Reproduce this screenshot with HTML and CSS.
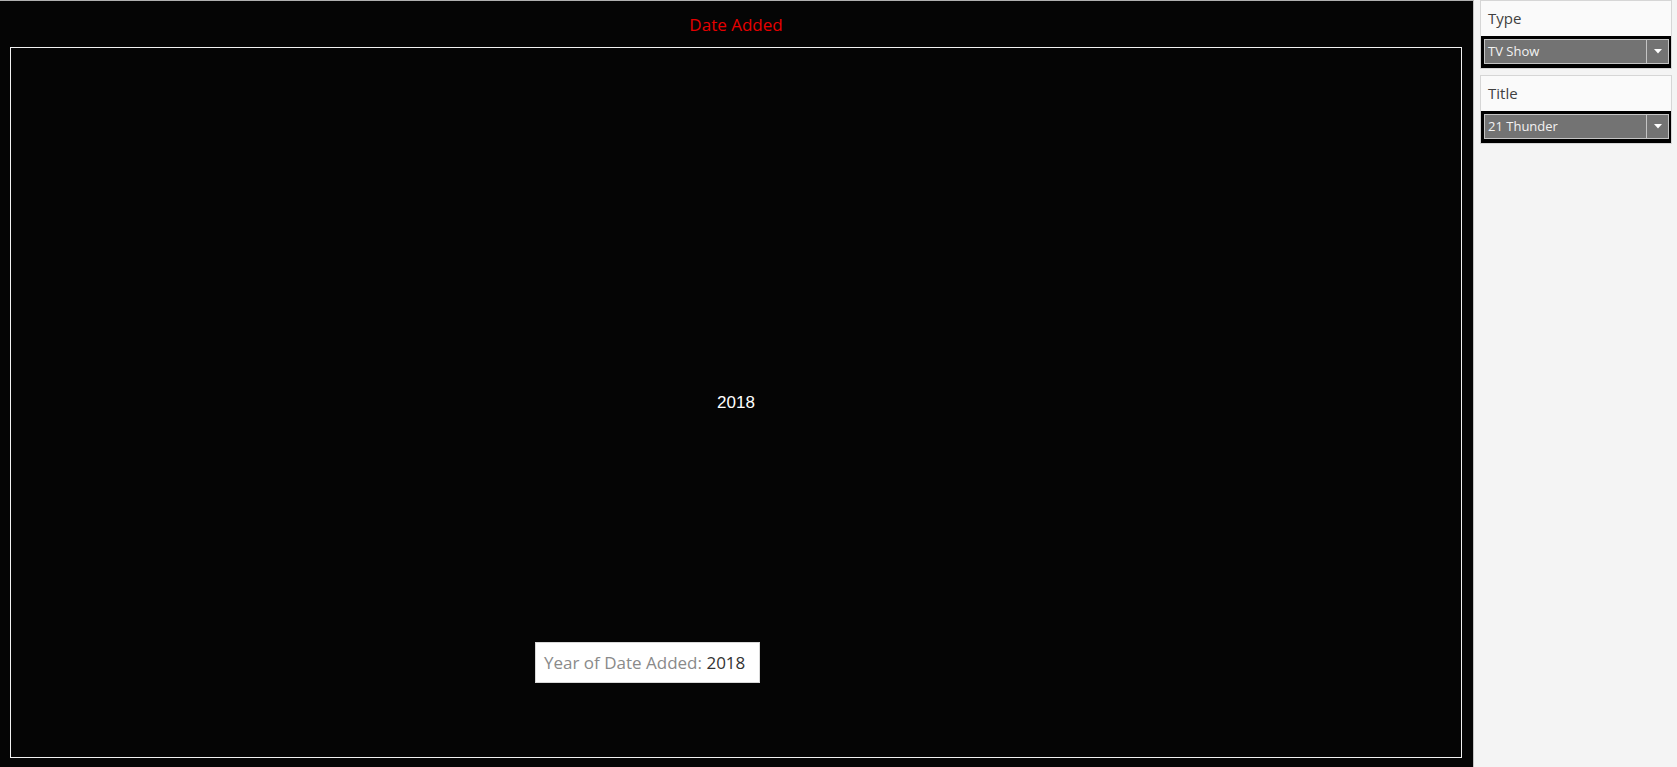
FILE: index.html
```html
<!DOCTYPE html>
<html>
<head>
<meta charset="utf-8">
<link rel="stylesheet" href="styles.css">
</head>
<body>
<div class="page">
  <div class="viz">
    <div class="viz-title">Date Added</div>
    <div class="viz-frame">
      <div class="year">2018</div>
      <div class="tooltip"><span class="tt-label">Year of Date Added:</span> <span class="tt-value">2018</span></div>
    </div>
  </div>
  <div class="side">
    <div class="filter">
      <div class="filter-label">Type</div>
      <div class="filter-band">
        <div class="dropdown">
          <span class="dd-text">TV Show</span>
          <span class="dd-arrow"><svg width="8" height="5" viewBox="0 0 8 5"><path d="M0 0 L8 0 L4 4.5 Z" fill="#ffffff"/></svg></span>
        </div>
      </div>
    </div>
    <div class="filter">
      <div class="filter-label">Title</div>
      <div class="filter-band">
        <div class="dropdown">
          <span class="dd-text">21 Thunder</span>
          <span class="dd-arrow"><svg width="8" height="5" viewBox="0 0 8 5"><path d="M0 0 L8 0 L4 4.5 Z" fill="#ffffff"/></svg></span>
        </div>
      </div>
    </div>
  </div>
</div>
</body>
</html>
```
FILE: styles.css
```css
html, body {
  margin: 0;
  padding: 0;
}
body {
  font-family: "Open Sans", "Noto Sans", "Liberation Sans", sans-serif;
  background: #f4f4f4;
}
.page {
  display: flex;
  width: 1677px;
  height: 767px;
}
.viz {
  width: 1474px;
  height: 767px;
  box-sizing: border-box;
  background: #050505;
  border-top: 1px solid #b0b0b0;
  border-right: 1px solid #c4c4c4;
  padding: 0 11px 9px 10px;
  display: flex;
  flex-direction: column;
}
.viz-title {
  height: 46px;
  flex: none;
  color: #e60000;
  font-size: 17px;
  text-align: center;
  line-height: 48px;
}
.viz-frame {
  flex: 1;
  border: 1px solid #f2f2f2;
  position: relative;
  display: flex;
  align-items: center;
  justify-content: center;
}
.year {
  color: #ffffff;
  font-size: 17px;
  font-family: "Liberation Sans", Arial, sans-serif;
  margin-top: 1px;
}
.tooltip {
  position: absolute;
  left: 524px;
  top: 594px;
  width: 225px;
  height: 41px;
  box-sizing: border-box;
  background: #ffffff;
  border: 1px solid #d8d8d8;
  font-size: 17px;
  line-height: 40px;
  padding-left: 8px;
  white-space: nowrap;
}
.tt-label {
  color: #8a8a8a;
}
.tt-value {
  color: #333333;
}
.side {
  flex: 1;
  background: #f4f4f4;
  padding: 0 5px 0 6px;
  display: flex;
  flex-direction: column;
  gap: 6px;
}
.filter {
  border: 1px solid #d6d6d6;
  background: #fafafa;
}
.filter-label {
  height: 35px;
  line-height: 34px;
  padding-left: 7px;
  font-size: 15px;
  color: #404040;
}
.filter-band {
  background: #000000;
  padding: 3px 2px 4px 3px;
}
.dropdown {
  height: 25px;
  box-sizing: border-box;
  background: #737373;
  border: 1px solid #c4c4c4;
  display: flex;
  align-items: stretch;
}
.dd-text {
  flex: 1;
  color: #f2f2f2;
  font-size: 13px;
  line-height: 23px;
  padding-left: 3px;
}
.dd-arrow {
  width: 21px;
  border-left: 1px solid #c4c4c4;
  display: flex;
  align-items: center;
  justify-content: center;
}
```
